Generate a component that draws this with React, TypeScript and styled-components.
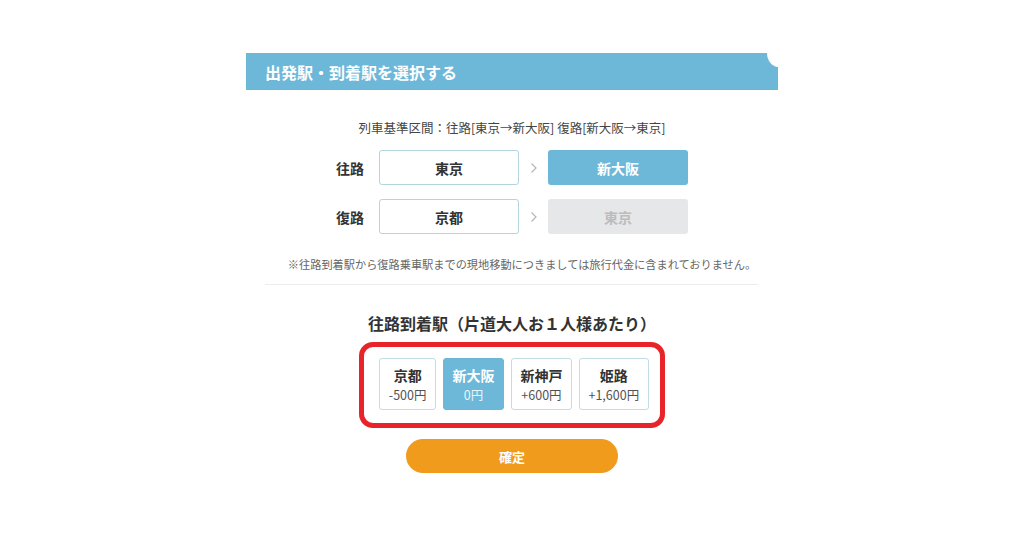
import React from "react";
import styled, { createGlobalStyle } from "styled-components";

const GlobalStyle = createGlobalStyle`
  body {
    margin: 0;
    background: #fff;
    font-family: "Noto Sans CJK JP", "Noto Sans", sans-serif;
    color: #333;
  }
`;

const BLUE = "#6db8d9";

const Page = styled.div`
  width: 1024px;
  height: 538px;
  display: flex;
  justify-content: center;
  padding-top: 53px;
  box-sizing: border-box;
`;

const Panel = styled.div`
  width: 532px;
  display: flex;
  flex-direction: column;
  align-items: center;
`;

const Header = styled.div`
  position: relative;
  align-self: stretch;
  height: 37px;
  background: ${BLUE};
  color: #fff;
  font-size: 16px;
  font-weight: 700;
  display: flex;
  align-items: center;
  padding-left: 19px;
  overflow: hidden;
  &::after {
    content: "";
    position: absolute;
    top: -14px;
    right: -13px;
    width: 24px;
    height: 28px;
    border-radius: 50%;
    background: #fff;
  }
`;

const Basis = styled.div`
  margin-top: 29px;
  font-size: 12.5px;
  line-height: 18px;
  color: #444;
`;

const Rows = styled.div`
  margin-top: 13px;
  display: flex;
  flex-direction: column;
  gap: 14px;
`;

const Row = styled.div`
  display: flex;
  align-items: center;
`;

const RowLabel = styled.div`
  width: 43px;
  font-size: 14px;
  font-weight: 700;
`;

type BoxVariant = "outline" | "active" | "disabled";

const StationBox = styled.div<{ $variant: BoxVariant }>`
  width: 140px;
  height: 35px;
  box-sizing: border-box;
  border-radius: 3px;
  display: flex;
  align-items: center;
  justify-content: center;
  font-size: 14px;
  font-weight: 700;
  border: 1px solid
    ${(p) => (p.$variant === "outline" ? "#b3d5de" : "transparent")};
  background: ${(p) =>
    p.$variant === "active" ? BLUE : p.$variant === "disabled" ? "#e6e7e8" : "#fff"};
  color: ${(p) =>
    p.$variant === "active" ? "#fff" : p.$variant === "disabled" ? "#bcbcbc" : "#333"};
`;

const Arrow = styled.div`
  width: 29px;
  display: flex;
  justify-content: center;
`;

const Note = styled.div`
  margin-top: 22px;
  padding-left: 20px;
  font-size: 11.2px;
  line-height: 16px;
  color: #666;
`;

const Divider = styled.hr`
  align-self: stretch;
  margin: 12px 20px 0 19px;
  border: 0;
  border-top: 1px solid #ececec;
`;

const Heading = styled.div`
  margin-top: 27px;
  font-size: 16px;
  font-weight: 700;
  line-height: 22px;
  color: #333;
`;

const Highlight = styled.div`
  margin-top: 8px;
  border: 5px solid #e8232a;
  border-radius: 14px;
  padding: 11px 11px 13px 15px;
  display: flex;
  gap: 7px;
`;

const Choice = styled.div<{ $active?: boolean }>`
  height: 52px;
  box-sizing: border-box;
  padding: 0 8.5px;
  border-radius: 3px;
  border: 1px solid ${(p) => (p.$active ? BLUE : "#c3dde4")};
  background: ${(p) => (p.$active ? BLUE : "#fff")};
  color: ${(p) => (p.$active ? "#fff" : "#333")};
  display: flex;
  flex-direction: column;
  align-items: center;
  justify-content: center;
`;

const ChoiceName = styled.div`
  font-size: 14px;
  font-weight: 700;
  line-height: 18px;
`;

const ChoicePrice = styled.div`
  font-size: 12.5px;
  line-height: 16px;
  margin-top: 3px;
  opacity: 0.85;
`;

const Confirm = styled.button`
  margin-top: 11px;
  width: 212px;
  height: 34px;
  border: 0;
  border-radius: 17px;
  background: #f19b1c;
  color: #fff;
  font-family: inherit;
  font-size: 13px;
  font-weight: 700;
`;

const Chevron = () => (
  <svg width="8" height="12" viewBox="0 0 8 12">
    <polyline points="1.5,1.5 6,6 1.5,10.5" fill="none" stroke="#b5b5b5" strokeWidth="1.2" />
  </svg>
);

const choices = [
  { name: "京都", price: "-500円" },
  { name: "新大阪", price: "0円", active: true },
  { name: "新神戸", price: "+600円" },
  { name: "姫路", price: "+1,600円" },
];

export default function App() {
  return (
    <>
      <GlobalStyle />
      <Page>
        <Panel>
          <Header>出発駅・到着駅を選択する</Header>
          <Basis>列車基準区間：往路[東京→新大阪] 復路[新大阪→東京]</Basis>
          <Rows>
            <Row>
              <RowLabel>往路</RowLabel>
              <StationBox $variant="outline">東京</StationBox>
              <Arrow>
                <Chevron />
              </Arrow>
              <StationBox $variant="active">新大阪</StationBox>
            </Row>
            <Row>
              <RowLabel>復路</RowLabel>
              <StationBox $variant="outline">京都</StationBox>
              <Arrow>
                <Chevron />
              </Arrow>
              <StationBox $variant="disabled">東京</StationBox>
            </Row>
          </Rows>
          <Note>
            ※往路到着駅から復路乗車駅までの現地移動につきましては旅行代金に含まれておりません。
          </Note>
          <Divider />
          <Heading>往路到着駅（片道大人お１人様あたり）</Heading>
          <Highlight>
            {choices.map((c) => (
              <Choice key={c.name} $active={c.active}>
                <ChoiceName>{c.name}</ChoiceName>
                <ChoicePrice>{c.price}</ChoicePrice>
              </Choice>
            ))}
          </Highlight>
          <Confirm>確定</Confirm>
        </Panel>
      </Page>
    </>
  );
}
